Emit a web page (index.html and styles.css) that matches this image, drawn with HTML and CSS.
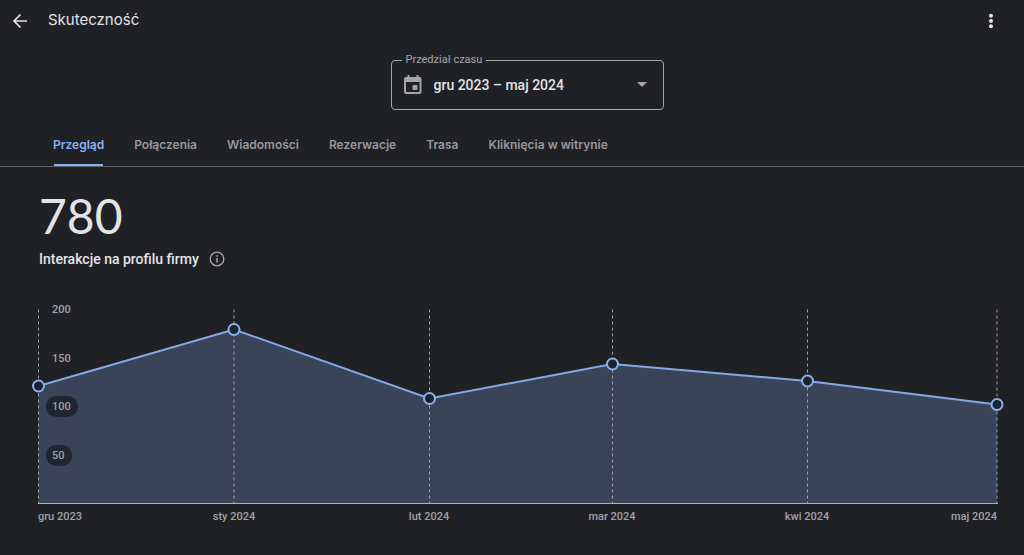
FILE: index.html
```html
<!DOCTYPE html>
<html lang="pl">
<head>
<meta charset="utf-8">
<meta name="viewport" content="width=device-width, initial-scale=1">
<title>Skuteczność</title>
<link rel="stylesheet" href="styles.css">
</head>
<body>
<header class="topbar">
  <button class="icon-button" type="button" aria-label="Wstecz">
    <svg width="16" height="16" viewBox="0 0 16 16" fill="none" stroke="currentColor" stroke-width="1.700"><path d="M15 8H2.500M8.500 1.500L2 8l6.500 6.500"/></svg>
  </button>
  <h1 class="title">Skuteczność</h1>
  <button class="icon-button icon-button-end" type="button" aria-label="Więcej opcji">
    <svg width="16" height="16" viewBox="0 0 16 16" fill="currentColor"><circle cx="8" cy="2.800" r="2"/><circle cx="8" cy="8" r="2"/><circle cx="8" cy="13.200" r="2"/></svg>
  </button>
</header>

<main>
  <fieldset class="period">
    <legend class="period-legend"><label for="period">Przedział czasu</label></legend>
    <div class="period-row">
      <svg width="18" height="20" viewBox="0 0 18 20" fill="currentColor"><path fill-rule="evenodd" d="M3.500 0h2v2h7V0h2v2H15.500a2 2 0 0 1 2 2v13a2 2 0 0 1-2 2H2a2 2 0 0 1-2-2V4a2 2 0 0 1 2-2h1.500zM2 7v10h13.500V7z"/><rect x="8.500" y="10" width="5" height="5" rx="1"/></svg>
      <select class="period-select" id="period"><option>gru 2023 – maj 2024</option></select>
      <svg class="period-arrow" width="10" height="5" viewBox="0 0 10 5" fill="currentColor"><path d="M0 0h10L5 5z"/></svg>
    </div>
  </fieldset>

  <div class="tabs" role="tablist">
    <button class="tab tab-active" type="button" role="tab" aria-selected="true">Przegląd</button>
    <button class="tab" type="button" role="tab">Połączenia</button>
    <button class="tab" type="button" role="tab">Wiadomości</button>
    <button class="tab" type="button" role="tab">Rezerwacje</button>
    <button class="tab" type="button" role="tab">Trasa</button>
    <button class="tab" type="button" role="tab">Kliknięcia w witrynie</button>
  </div>

  <section class="summary">
    <p class="total">780</p>
    <div class="caption">
      <h2 class="caption-text">Interakcje na profilu firmy</h2>
      <button class="info" type="button" aria-label="Informacje">
        <svg width="16" height="16" viewBox="0 0 16 16" fill="none" stroke="currentColor"><circle cx="8" cy="8" r="6.800" stroke-width="1.300"/><path d="M8 7v4.500M8 4.300v1.500" stroke-width="1.500"/></svg>
      </button>
    </div>
  </section>

  <svg class="chart" viewBox="0 0 1024 230" role="img" aria-label="Interakcje na profilu firmy, gru 2023 – maj 2024">
    <path class="area" d="M38.500 86L234 29.500 429.500 98.500 612.500 64 807.500 81 997 104.500V203.500H38.500z"/>
    <path class="guides" d="M38.500 9.500v194M234 9.500v194M429.500 9.500v194M612.500 9.500v194M807.500 9.500v194M997 9.500v194"/>
    <path class="baseline" d="M38 203.500H998"/>
    <path class="line" d="M38.500 86L234 29.500 429.500 98.500 612.500 64 807.500 81 997 104.500"/>
    <g class="points">
      <circle cx="38.500" cy="86" r="5.500"/><circle cx="234" cy="29.500" r="5.500"/><circle cx="429.500" cy="98.500" r="5.500"/><circle cx="612.500" cy="64" r="5.500"/><circle cx="807.500" cy="81" r="5.500"/><circle cx="997" cy="104.500" r="5.500"/>
    </g>
    <rect class="pill" x="46" y="96" width="32" height="21" rx="10"/>
    <rect class="pill" x="46" y="145" width="26" height="21" rx="10"/>
    <g class="labels">
      <text x="52" y="13">200</text>
      <text x="52" y="62">150</text>
      <text x="52" y="110">100</text>
      <text x="52" y="159">50</text>
      <text x="38" y="220">gru 2023</text>
      <text class="middle" x="234" y="220">sty 2024</text>
      <text class="middle" x="429" y="220">lut 2024</text>
      <text class="middle" x="612" y="220">mar 2024</text>
      <text class="middle" x="807" y="220">kwi 2024</text>
      <text class="end" x="997" y="220">maj 2024</text>
    </g>
  </svg>
</main>
</body>
</html>
```
FILE: styles.css
```css
* {
  box-sizing: border-box;
}

body {
  margin: 0;
  background: #202125;
  color: #e3e4e8;
  font-family: Roboto, "Liberation Sans", sans-serif;
}

button {
  margin: 0;
  padding: 0;
  border: 0;
  background: none;
  color: inherit;
  font: inherit;
  cursor: pointer;
}

svg {
  display: block;
  flex: none;
}

main {
  display: flex;
  flex-direction: column;
}

.topbar {
  display: flex;
  align-items: center;
  height: 40px;
  padding: 0 24px 0 12px;
}

.icon-button {
  padding-top: 2px;
}

.icon-button-end {
  margin-left: auto;
  margin-right: 1px;
}

.title {
  margin: 0 0 0 20px;
  font: 400 15px/24px Inter, sans-serif;
}

.period {
  align-self: center;
  width: 273px;
  min-width: 0;
  margin: 14px 0 0 30px;
  padding: 0 16px 0 12px;
  border: 1px solid #a5a6aa;
  border-radius: 4px;
  color: #a5a6aa;
}

.period-legend {
  margin-left: -2px;
  padding: 0 4px;
  font-size: 11px;
  line-height: 12px;
}

.period-row {
  display: flex;
  align-items: center;
  height: 43px;
  padding-bottom: 6px;
}

.period-select {
  flex: 1;
  margin: 0 0 0 12px;
  padding: 0;
  border: 0;
  appearance: none;
  background: none;
  color: #e3e4e8;
  font: 500 14px/24px Roboto, sans-serif;
}

.tabs {
  display: flex;
  gap: 30px;
  margin-top: 14px;
  padding: 0 53px;
  border-bottom: 1px solid #5f6065;
}

.tab {
  position: relative;
  height: 42px;
  color: #96979b;
  font: 600 12px/42px Inter, sans-serif;
  white-space: nowrap;
}

.tab-active {
  color: #8ab0f0;
}

.tab-active::after {
  content: "";
  position: absolute;
  right: 1px;
  bottom: 0;
  left: 1px;
  height: 2px;
  background: #8ab0f0;
}

.summary {
  padding: 20px 39px 0;
}

.total {
  margin: 0;
  font: 400 48px/58px Lato, sans-serif;
}

.caption {
  display: flex;
  align-items: center;
  gap: 10px;
  margin-top: 4px;
}

.caption-text {
  margin: 0;
  font-size: 14px;
  font-weight: 500;
  line-height: 20px;
}

.info {
  color: #a5a6aa;
}

.chart {
  width: 100%;
  height: auto;
  margin-top: 31px;
}

.area {
  fill: #3a4458;
}

.guides {
  fill: none;
  stroke: #a0a3aa;
  stroke-dasharray: 3 3;
}

.baseline {
  stroke: #b0b2b8;
}

.line {
  fill: none;
  stroke: #85a8e6;
  stroke-width: 2;
}

.points {
  fill: #1d222c;
  stroke: #8ab0f0;
  stroke-width: 2;
}

.pill {
  fill: #202530;
}

.labels {
  fill: #a0a1a5;
  font-size: 11px;
  font-weight: 500;
}

.middle {
  text-anchor: middle;
}

.end {
  text-anchor: end;
}
```
